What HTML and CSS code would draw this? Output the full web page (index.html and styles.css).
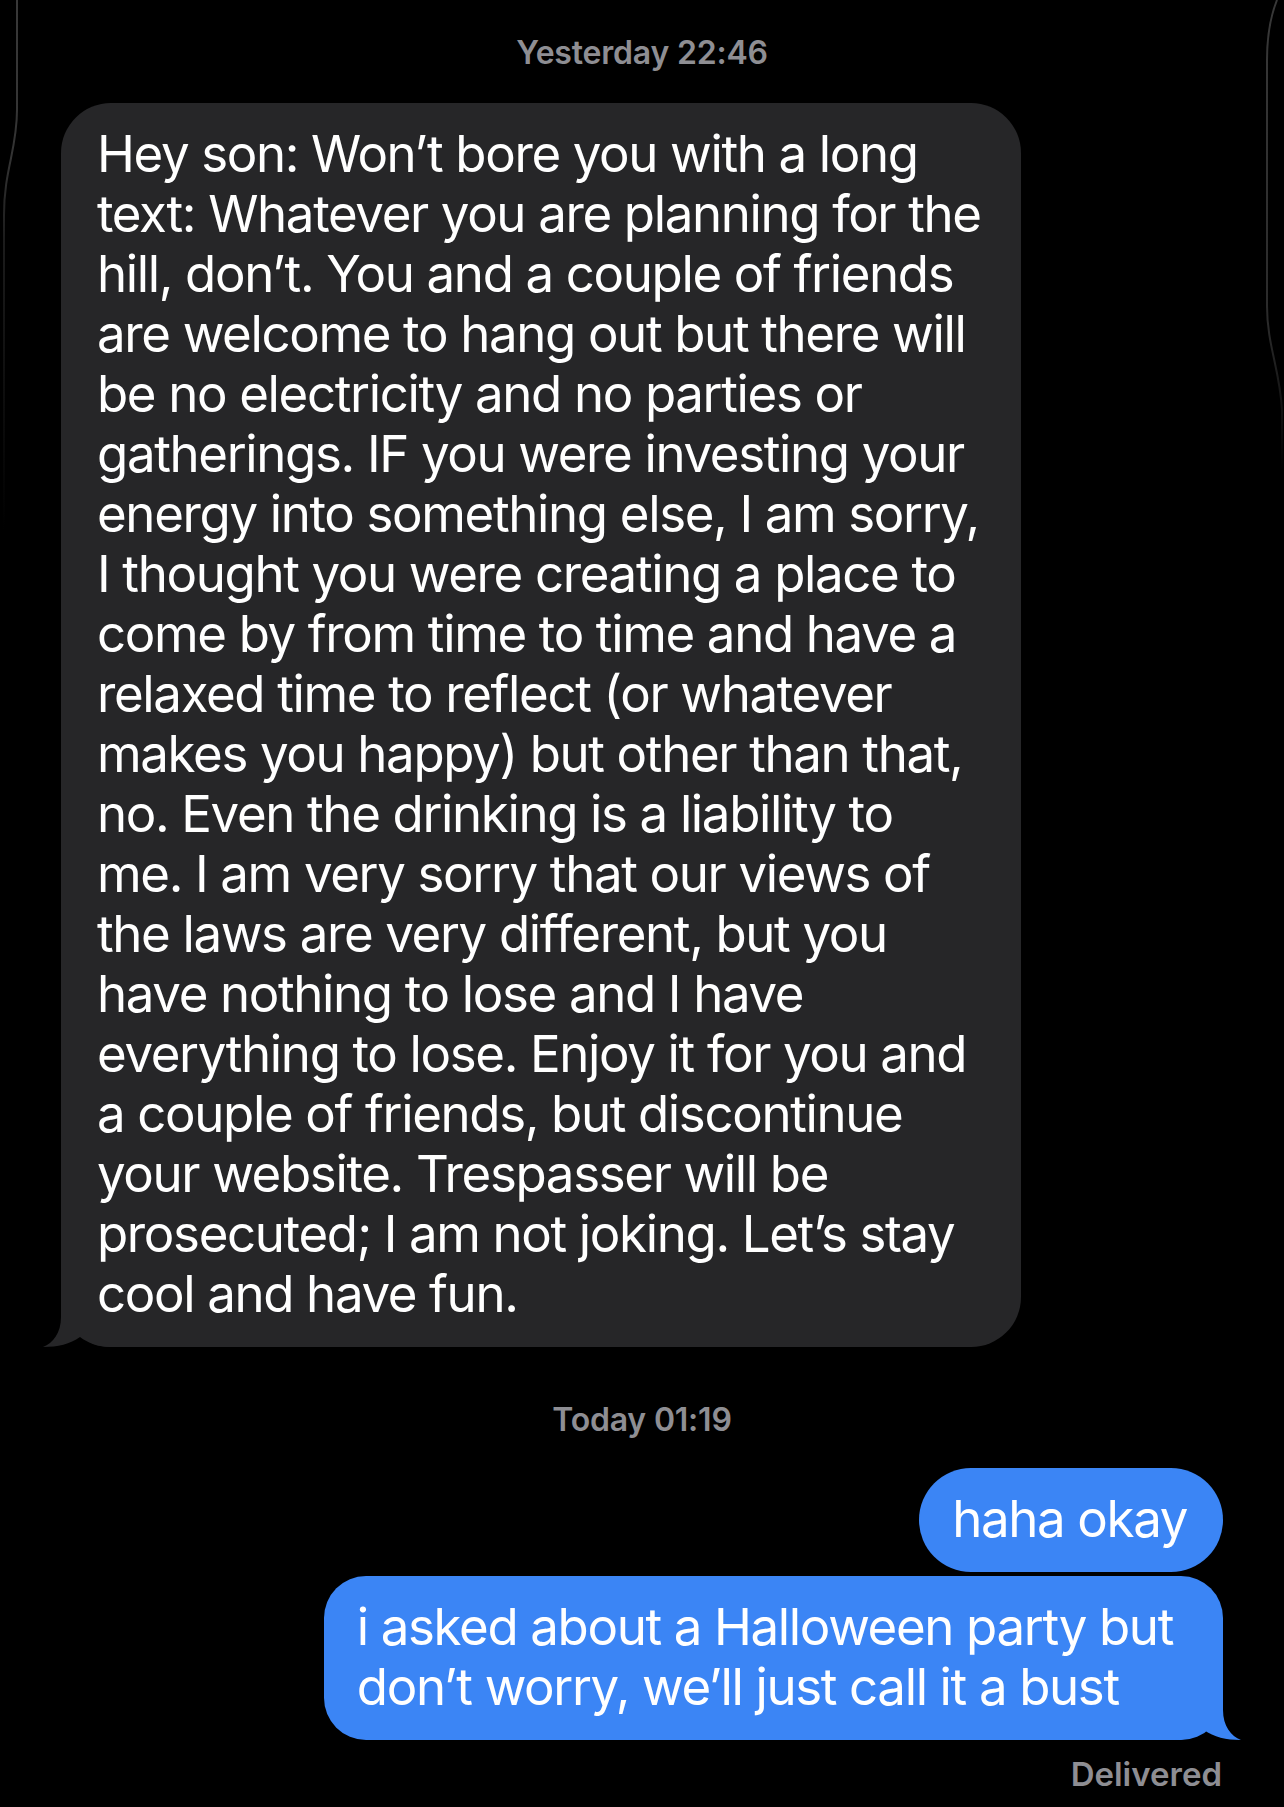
FILE: index.html
```html
<!DOCTYPE html>
<html lang="en">
<head>
<meta charset="utf-8">
<title>Messages</title>
<link rel="stylesheet" href="styles.css">
</head>
<body>
<main class="thread">
  <svg class="edges" width="1284" height="1807" viewBox="0 0 1284 1807" aria-hidden="true">
    <defs>
      <linearGradient id="fadeL" gradientUnits="userSpaceOnUse" x1="0" y1="0" x2="0" y2="530">
        <stop offset="0" stop-color="#383838"/>
        <stop offset="0.3" stop-color="#333333"/>
        <stop offset="0.45" stop-color="#1c1c1c"/>
        <stop offset="1" stop-color="#000000"/>
      </linearGradient>
      <linearGradient id="fadeR" gradientUnits="userSpaceOnUse" x1="0" y1="0" x2="0" y2="470">
        <stop offset="0" stop-color="#383838"/>
        <stop offset="0.7" stop-color="#2a2a2a"/>
        <stop offset="1" stop-color="#000000"/>
      </linearGradient>
    </defs>
    <path d="M17 0 L17 110 C17 150 4 170 4 215 L4 530" fill="none" stroke="url(#fadeL)" stroke-width="2"/>
    <path d="M1277 0 C1271 15 1267 35 1267 60 L1267 306 C1267 345 1280 370 1282 410 L1282 470" fill="none" stroke="url(#fadeR)" stroke-width="2"/>
  </svg>

  <div class="stamp stamp-first"><span class="stamp-day">Yesterday</span> 22:46</div>

  <div class="msg incoming">Hey son: Won’t bore you with a long<br>text: Whatever you are planning for the<br>hill, don’t. You and a couple of friends<br>are welcome to hang out but there will<br>be no electricity and no parties or<br>gatherings. IF you were investing your<br>energy into something else, I am sorry,<br>I thought you were creating a place to<br>come by from time to time and have a<br>relaxed time to reflect (or whatever<br>makes you happy) but other than that,<br>no. Even the drinking is a liability to<br>me. I am very sorry that our views of<br>the laws are very different, but you<br>have nothing to lose and I have<br>everything to lose. Enjoy it for you and<br>a couple of friends, but discontinue<br>your website. Trespasser will be<br>prosecuted; I am not joking. Let’s stay<br>cool and have fun.<svg class="tail tail-left" width="72" height="50" viewBox="0 0 72 50" aria-hidden="true"><path d="M21 0 L21 20 C21 36 13 46 3 50 C18 50 30 47 40 40 C48 46 58 50 70 50 L72 50 L72 0 Z"/></svg></div>

  <div class="stamp stamp-second"><span class="stamp-day">Today</span> 01:19</div>

  <div class="msg outgoing pill">haha okay</div>
  <div class="msg outgoing last">i asked about a Halloween party but<br>don’t worry, we’ll just call it a bust<svg class="tail tail-right" width="72" height="50" viewBox="0 0 72 50" aria-hidden="true"><path d="M21 0 L21 20 C21 36 13 46 3 50 C18 50 30 47 40 40 C48 46 58 50 70 50 L72 50 L72 0 Z"/></svg></div>

  <div class="status">Delivered</div>
</main>
</body>
</html>
```

FILE: styles.css
```css
html, body {
  margin: 0;
  padding: 0;
  background: #000000;
}

body {
  font-family: Inter, "Noto Sans", "Liberation Sans", sans-serif;
  -webkit-font-smoothing: antialiased;
}

.thread {
  position: relative;
  box-sizing: border-box;
  width: 1284px;
  height: 1807px;
  padding: 33px 61px 0 61px;
  display: flex;
  flex-direction: column;
  overflow: hidden;
}

.edges {
  position: absolute;
  left: 0;
  top: 0;
  pointer-events: none;
}

.stamp {
  text-align: center;
  font-size: 32px;
  line-height: 40px;
  font-weight: 600;
  color: #8e8e93;
  letter-spacing: -0.2px;
}

.stamp-first {
  margin-bottom: 30px;
}

.stamp-second {
  margin-top: 53px;
  margin-bottom: 28px;
}

.msg {
  position: relative;
  z-index: 0;
  font-size: 51px;
  line-height: 60px;
  letter-spacing: -1.36px;
  color: #ffffff;
  white-space: nowrap;
  padding: 21px 36px 23px 33px;
  border-radius: 50px;
}

.incoming {
  align-self: flex-start;
  background: #262628;
  padding-left: 36px;
  padding-right: 40px;
}

.outgoing {
  align-self: flex-end;
  background: #3b85f5;
}

.pill {
  border-radius: 52px;
}

.outgoing + .outgoing {
  margin-top: 4px;
}

.last {
  border-radius: 42px;
  padding-right: 50px;
}

.tail {
  position: absolute;
  bottom: 0;
  z-index: -1;
}

.tail-left {
  left: -21px;
  fill: #262628;
}

.tail-right {
  right: -21px;
  fill: #3b85f5;
  transform: scaleX(-1);
}

.status {
  align-self: flex-end;
  margin-top: 14px;
  margin-right: 1px;
  font-size: 33px;
  line-height: 40px;
  font-weight: 600;
  color: #8e8e93;
}
```
